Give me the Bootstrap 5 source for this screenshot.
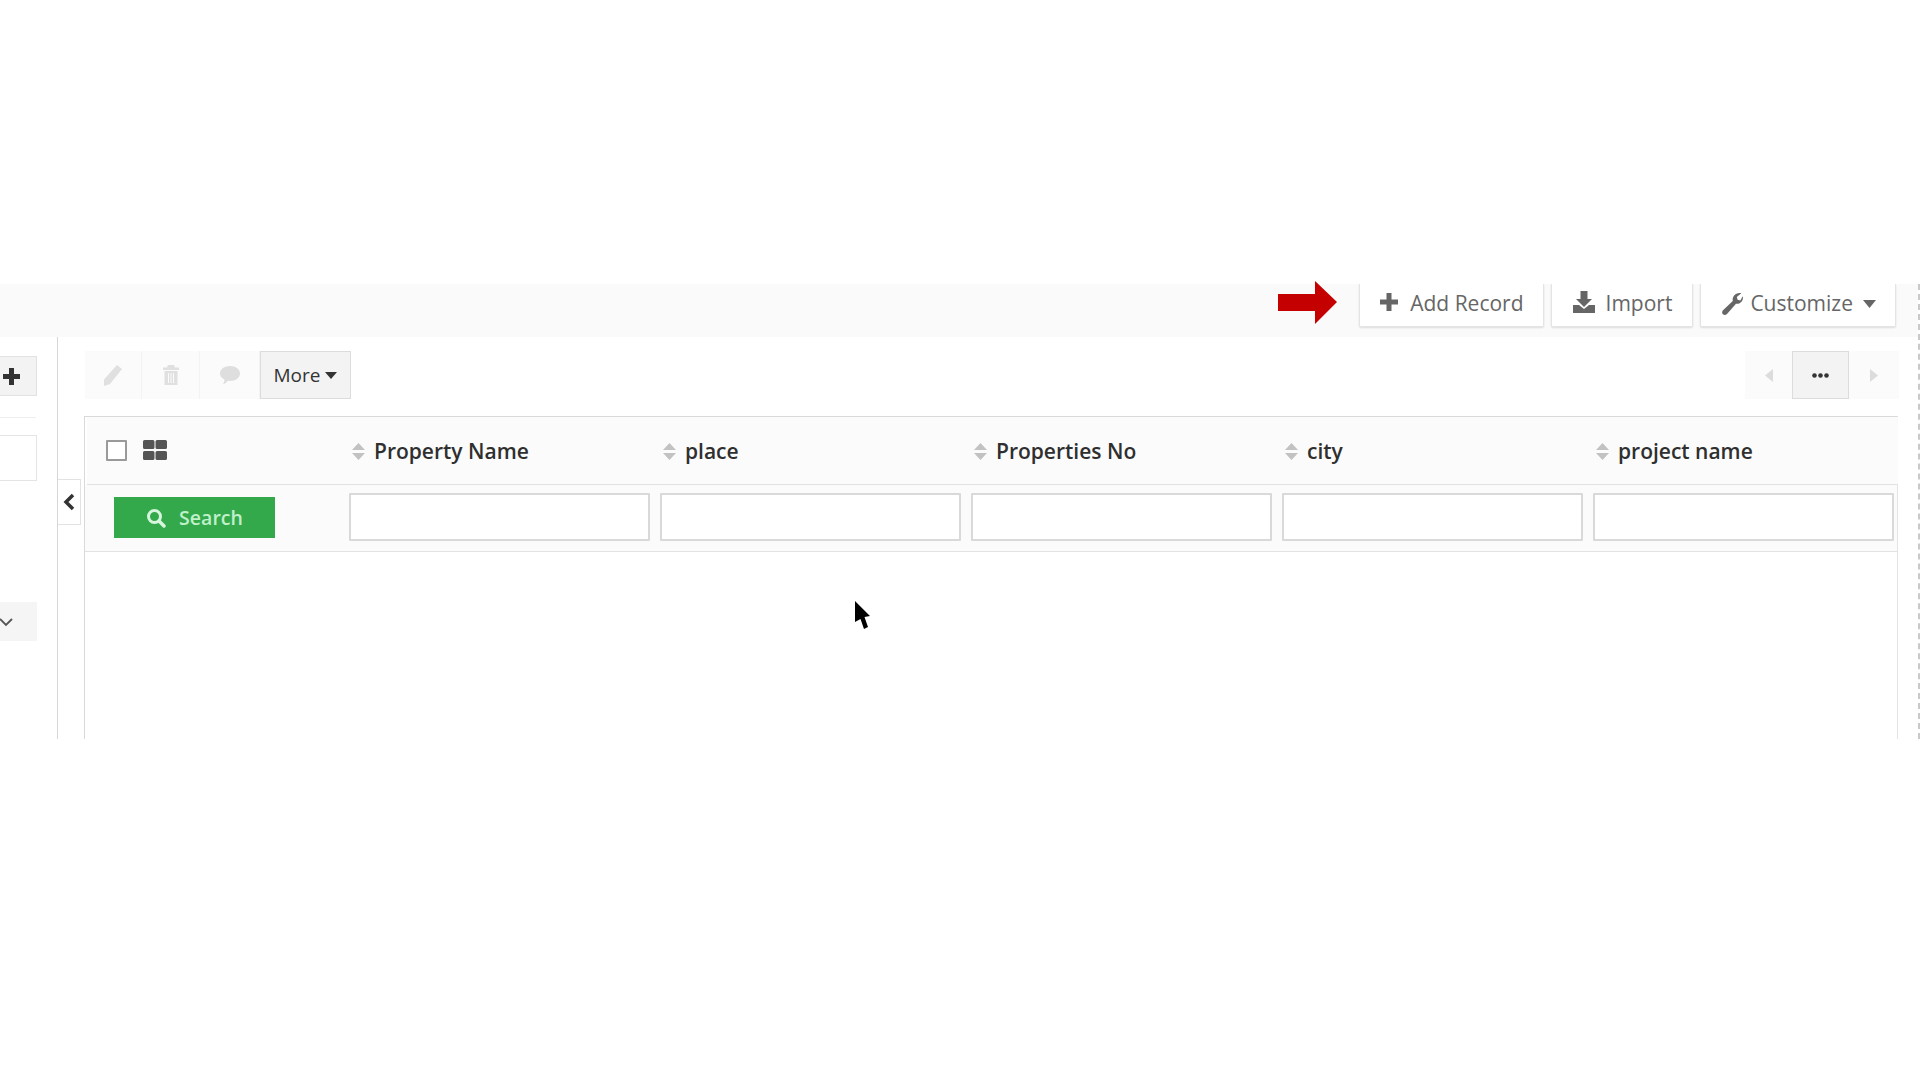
<!DOCTYPE html>
<html lang="en">
<head>
<meta charset="utf-8">
<title>Records</title>
<link href="https://cdn.jsdelivr.net/npm/bootstrap@5.3.0/dist/css/bootstrap.min.css" rel="stylesheet">
<style>
body{background:#fff;font-family:"Open Sans","Noto Sans",sans-serif;color:#333;overflow:hidden}
.stage{margin-top:284px;height:455px;position:relative;border-right:2px dashed #c9c9c9}
.topband{height:53px;background:#fafafa;padding-right:22px;gap:7px}
.topbtn{height:43px;background:#fff;border:1px solid #e4e4e4;border-top:0;border-radius:0 0 2px 2px;box-shadow:0 1px 2px rgba(0,0,0,.12);color:#666;font-size:21px;gap:9px;padding:0 19px 2px}
.topbtn.addrec{gap:11px}
.topbtn.importbtn{gap:10px;padding-left:20px;padding-right:20px}
.topbtn.custbtn{gap:6px;padding-left:20px}
.topbtn svg.lift{margin-bottom:4px}
.arrowmark{margin-right:15px;margin-top:-3px}
.leftcol{width:58px;flex:none;border-right:1px solid #d6d6d6;position:relative}
.sidebtn{height:40px;width:37px;background:#f3f3f3;border:1px solid #e2e2e2;border-left:0;margin-top:19px}
.siderule{width:36px;border-top:1px solid #eee;margin-top:21px}
.sidebox{width:37px;height:46px;border:1px solid #e4e4e4;border-left:0;margin-top:17px}
.sidesel{width:37px;height:39px;background:#f5f5f5;margin-top:121px}
.maincol{padding-left:27px;padding-right:20px;min-width:0}
.tools{height:48px;margin-top:14px;margin-right:-1px}
.softbtn{height:48px;background:#fbfbfb;border-right:1px solid #f3f3f3}
.softbtn.a1{width:57px}.softbtn.a2{width:58px}.softbtn.a3{width:60px}
.morebtn{width:91px;height:48px;background:#f3f3f3;border:1px solid #dcdcdc;font-size:19px;color:#333;gap:5px}
.pageside{height:48px;background:#fbfbfb}
.pg1{width:47px}.pg3{width:50px}
.pgmid{width:57px;height:48px;background:#f3f3f3;border:1px solid #dcdcdc}
.gridwrap{margin-top:17px;margin-left:-1px;border-left:1px solid #d9d9d9;border-right:1px solid #e4e4e4;border-top:1px solid #d9d9d9;height:323px;background:#fff}
.gridhead{height:68px;background:#fbfbfb;border-bottom:1px solid #e2e2e2;margin-left:2px;margin-right:-1px}
.gridfilter{height:67px;background:#fbfbfb;border-bottom:1px solid #e2e2e2}
.firstcol{width:262px;flex:none}
.hcell,.fcell{width:311px;flex:none}
.hcell:last-child,.fcell:last-child{width:305px}
.hcell{font-weight:600;font-size:21px;color:#2f2f2f;gap:9px;padding-left:3px;padding-top:1px}
.hcell span{position:relative;top:1px}
.fcell{padding-top:8px}
.fakeinput{display:block;width:301px;height:48px;border:2px solid #d9d9d9;border-radius:1px;background:#fff;padding:0}
.greenbtn{width:161px;height:41px;margin-left:29px;margin-top:12px;background:#33a94c;color:#bff0c9;font-size:19.5px;font-weight:600;gap:13px;border-radius:0;border:0}
.fcheck{width:21px;height:21px;border:2px solid #9a9a9a;background:#fff;border-radius:1px;margin-left:19px}
.gridicon{margin-left:16px;margin-top:-2px}
.collapsetab{position:absolute;left:58px;top:195px;width:23px;height:46px;background:#fff;border:1px solid #e2e2e2;border-left:0}
.pointer{position:absolute;left:855px;top:317px}
</style>
</head>
<body>
<div class="stage d-flex flex-column">
  <div class="topband d-flex justify-content-end align-items-start flex-none">
    <svg class="arrowmark" width="59" height="43" viewBox="0 0 59 43"><path d="M0 13H37V0L59 21 37 43V30H0Z" fill="#c40000"/></svg>
    <div class="topbtn addrec d-flex align-items-center">
      <svg class="lift" width="20" height="20" viewBox="0 0 20 20"><path d="M7.500 1h5v6.500H19v5h-6.500V19h-5v-6.500H1v-5h6.500Z" fill="#666"/></svg>
      <span>Add Record</span>
    </div>
    <div class="topbtn importbtn d-flex align-items-center">
      <svg class="lift" width="24" height="24" viewBox="0 0 24 24"><path d="M8.500 1h7v8h4.500L12 17 4 9h4.500ZM1 15h6l5 4 5-4h6v8H1Z" fill="#666"/></svg>
      <span>Import</span>
    </div>
    <div class="topbtn custbtn d-flex align-items-center">
      <svg width="23" height="24" viewBox="0 0 23 24"><path d="M22 5.500c0 4-3.300 6.800-7 6.300L6 22c-1.200 1.300-3 1.300-4.100.2C.8 21 .9 19.300 2 18.200l9.800-9.200C11 5 14 1 18.500 1c.7 0 1.300.1 1.800.3L15.800 5l.8 2.800 2.700.8 2.500-4.300c.1.400.2.800.2 1.200Z" fill="#666"/></svg>
      <span>Customize</span>
      <svg class="ms-1" width="13" height="8" viewBox="0 0 13 8"><path d="M0 0h13L6.500 8Z" fill="#666"/></svg>
    </div>
  </div>
  <div class="d-flex flex-grow-1">
    <div class="leftcol">
      <div class="sidebtn d-flex align-items-center justify-content-end pe-3">
        <svg class="flex-shrink-0" width="17" height="17" viewBox="0 0 17 17"><path d="M6 0h5v6h6v5h-6v6H6v-6H0V6h6Z" fill="#333"/></svg>
      </div>
      <div class="siderule"></div>
      <div class="sidebox"></div>
      <div class="sidesel d-flex align-items-center">
        <svg width="14" height="10" viewBox="0 0 14 10"><path d="M0 2l6 6 6-6" fill="none" stroke="#555" stroke-width="1.800"/></svg>
      </div>
    </div>
    <div class="maincol flex-grow-1">
      <div class="tools d-flex justify-content-between">
        <div class="d-flex">
          <div class="softbtn a1 d-flex align-items-center justify-content-center">
            <svg width="20" height="22" viewBox="0 0 20 22"><path d="M14 1l5 4L7 20l-6 2 0-6.500Z" fill="#e0e0e0"/></svg>
          </div>
          <div class="softbtn a2 d-flex align-items-center justify-content-center">
            <svg width="18" height="22" viewBox="0 0 18 22"><path d="M6 1h6l1 2.500h4V6H1V3.500h4ZM2.500 7h13v14h-13Z" fill="#e0e0e0"/><path d="M6.500 9v10M9 9v10M11.500 9v10" stroke="#fbfbfb" stroke-width="1"/></svg>
          </div>
          <div class="softbtn a3 d-flex align-items-center justify-content-center">
            <svg width="22" height="20" viewBox="0 0 22 20"><path d="M11 1c5.500 0 10 3 10 7.500S16.500 16 11 16c-1 0-1.500 0-2.300-.2C7.500 17.500 6 19 4 19c1-1.300 1.500-3 1.400-4.500C2.800 13.200 1 11 1 8.500 1 4 5.500 1 11 1Z" fill="#dedede"/></svg>
          </div>
          <div class="morebtn d-flex align-items-center justify-content-center">
            <span>More</span>
            <svg width="12" height="7" viewBox="0 0 12 7"><path d="M0 0h12L6 7Z" fill="#333"/></svg>
          </div>
        </div>
        <div class="d-flex">
          <div class="pageside pg1 d-flex align-items-center justify-content-center">
            <svg width="8" height="13" viewBox="0 0 8 13"><path d="M8 0v13L0 6.500Z" fill="#dcdcdc"/></svg>
          </div>
          <div class="pgmid d-flex align-items-center justify-content-center">
            <svg width="17" height="5" viewBox="0 0 17 5"><circle cx="2.500" cy="2.500" r="2.300" fill="#333"/><circle cx="8.500" cy="2.500" r="2.300" fill="#333"/><circle cx="14.500" cy="2.500" r="2.300" fill="#333"/></svg>
          </div>
          <div class="pageside pg3 d-flex align-items-center justify-content-center">
            <svg width="8" height="13" viewBox="0 0 8 13"><path d="M0 0v13l8-6.500Z" fill="#dcdcdc"/></svg>
          </div>
        </div>
      </div>
      <div class="gridwrap">
        <div class="gridhead d-flex align-items-center">
          <div class="firstcol d-flex align-items-center">
            <span class="fcheck d-block"></span>
            <svg class="gridicon" width="24" height="20" viewBox="0 0 23 20" preserveAspectRatio="none"><path d="M1.500 0h8A1.500 1.500 0 0 1 11 1.500v6A1.500 1.500 0 0 1 9.500 9h-8A1.500 1.500 0 0 1 0 7.500v-6A1.500 1.500 0 0 1 1.500 0ZM13.500 0h8A1.500 1.500 0 0 1 23 1.500v6A1.500 1.500 0 0 1 21.500 9h-8A1.500 1.500 0 0 1 12 7.500v-6A1.500 1.500 0 0 1 13.500 0ZM1.500 11h8A1.500 1.500 0 0 1 11 12.500v6A1.500 1.500 0 0 1 9.500 20h-8A1.500 1.500 0 0 1 0 18.500v-6A1.500 1.500 0 0 1 1.500 11ZM13.500 11h8A1.500 1.500 0 0 1 23 12.500v6A1.500 1.500 0 0 1 21.500 20h-8A1.500 1.500 0 0 1 12 18.500v-6A1.500 1.500 0 0 1 13.500 11Z" fill="#555"/></svg>
          </div>
          <div class="hcell d-flex align-items-center"><svg width="13" height="17" viewBox="0 0 13 17"><path d="M6.500 0L13 7H0ZM0 10h13l-6.500 7Z" fill="#c2c2c2"/></svg><span>Property Name</span></div>
          <div class="hcell d-flex align-items-center"><svg width="13" height="17" viewBox="0 0 13 17"><path d="M6.500 0L13 7H0ZM0 10h13l-6.500 7Z" fill="#c2c2c2"/></svg><span>place</span></div>
          <div class="hcell d-flex align-items-center"><svg width="13" height="17" viewBox="0 0 13 17"><path d="M6.500 0L13 7H0ZM0 10h13l-6.500 7Z" fill="#c2c2c2"/></svg><span>Properties No</span></div>
          <div class="hcell d-flex align-items-center"><svg width="13" height="17" viewBox="0 0 13 17"><path d="M6.500 0L13 7H0ZM0 10h13l-6.500 7Z" fill="#c2c2c2"/></svg><span>city</span></div>
          <div class="hcell d-flex align-items-center"><svg width="13" height="17" viewBox="0 0 13 17"><path d="M6.500 0L13 7H0ZM0 10h13l-6.500 7Z" fill="#c2c2c2"/></svg><span>project name</span></div>
        </div>
        <div class="gridfilter d-flex">
          <div class="firstcol" style="width:264px">
            <button type="button" class="btn greenbtn d-flex align-items-center justify-content-center">
              <svg width="20" height="20" viewBox="0 0 20 20"><circle cx="8.500" cy="8.500" r="6" fill="none" stroke="#d6f5dc" stroke-width="3"/><path d="M13 13l5 5" stroke="#d6f5dc" stroke-width="3.500" stroke-linecap="round"/></svg>
              <span>Search</span>
            </button>
          </div>
          <div class="fcell"><input class="fakeinput" type="text" aria-label="Property Name"></div>
          <div class="fcell"><input class="fakeinput" type="text" aria-label="place"></div>
          <div class="fcell"><input class="fakeinput" type="text" aria-label="Properties No"></div>
          <div class="fcell"><input class="fakeinput" type="text" aria-label="city"></div>
          <div class="fcell"><input class="fakeinput" type="text" aria-label="project name"></div>
        </div>
      </div>
    </div>
  </div>
  <div class="collapsetab d-flex align-items-center justify-content-center">
    <svg width="12" height="18" viewBox="0 0 12 18"><path d="M10 2L3 9l7 7" fill="none" stroke="#333" stroke-width="3.500"/></svg>
  </div>
  <svg class="pointer" width="16" height="28" viewBox="0 0 16 28"><path d="M0 0L15 15 9.500 16 13 26 9 28 5.500 18 0 21Z" fill="#000"/></svg>
</div>
</body>
</html>
